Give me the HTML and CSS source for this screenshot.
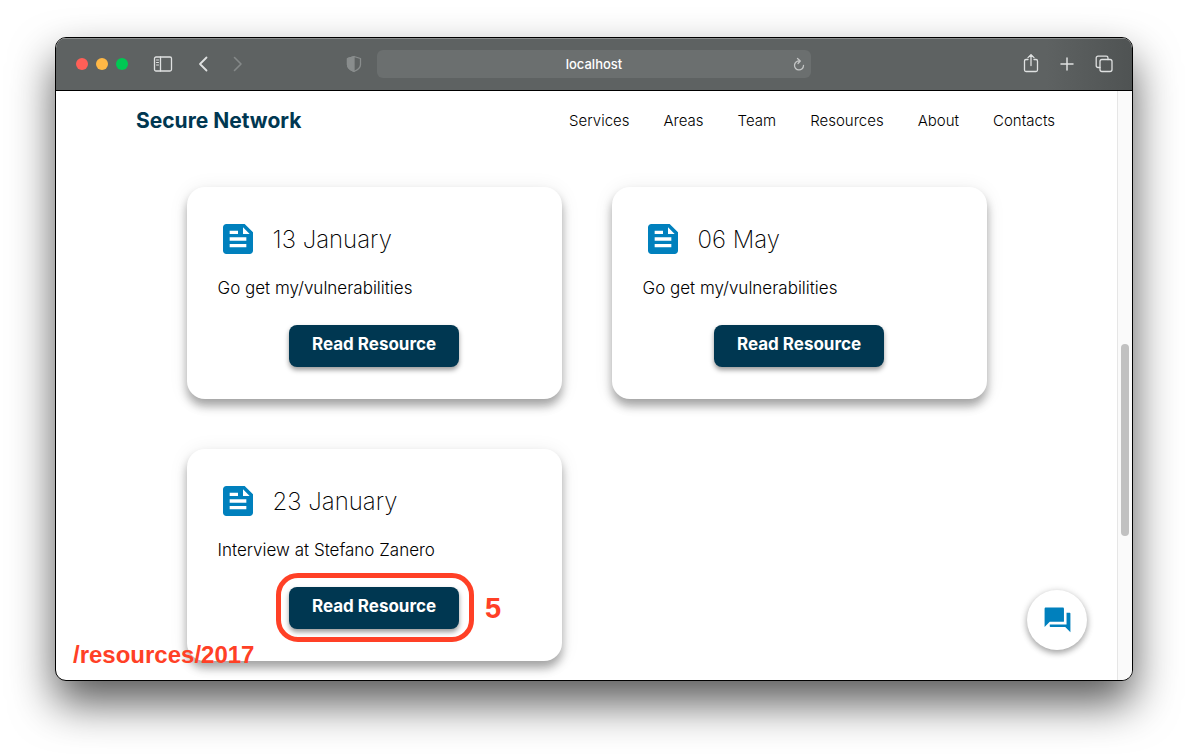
FILE: index.html
```html
<!DOCTYPE html>
<html lang="en">
<head>
<meta charset="utf-8">
<meta name="viewport" content="width=device-width, initial-scale=1">
<title>Secure Network</title>
<link rel="stylesheet" href="styles.css">
</head>
<body>
<svg class="defs" aria-hidden="true">
  <symbol id="doc" viewBox="0 0 24 24"><path fill-rule="evenodd" d="M16 3H5c-1.100 0-2 .9-2 2v14c0 1.100.9 2 2 2h14c1.100 0 2-.9 2-2V8zM7 7h5v2H7zm10 10H7v-2h10zm0-4H7v-2h10zm-2-4V5l4 4z"/></symbol>
</svg>
<div class="window">
  <div class="toolbar">
    <div class="tools-left">
      <span class="dots"><i class="dot red"></i><i class="dot amber"></i><i class="dot green"></i></span>
      <button class="tool sidebar-btn" aria-label="Sidebar"><svg width="20" height="16" viewBox="0 0 20 16"><rect x="1.500" y="1" width="17" height="14" rx="1.500"/><path d="M7.500 1v14"/><path d="M3.500 4h2M3.500 6.500h2M3.500 9h2" stroke-width="1"/></svg></button>
      <button class="tool back-btn" aria-label="Back"><svg width="10" height="16" viewBox="0 0 10 16"><path d="M8.500 1.500L2 8l6.500 6.500" stroke-width="1.800"/></svg></button>
      <button class="tool forward" aria-label="Forward"><svg width="10" height="16" viewBox="0 0 10 16"><path d="M1.500 1.500L8 8l-6.500 6.500" stroke-width="1.600"/></svg></button>
    </div>
    <div class="address">
      <button class="tool shield" aria-label="Privacy"><svg width="16" height="18" viewBox="0 0 16 18"><path d="M8 1.500L1.500 3.500v6c0 3.500 3 5.500 6.500 7 3.500-1.500 6.500-3.500 6.500-7v-6z"/><path class="fill" d="M8 1.500L1.500 3.500v6c0 3.500 3 5.500 6.500 7z"/></svg></button>
      <div class="url-box">
        <input class="url" type="text" value="localhost" aria-label="Address">
        <button class="tool reload" aria-label="Reload"><svg width="12" height="14" viewBox="0 0 12 14"><path d="M6.500 4A4.500 4.500 0 1 0 10.500 8.500M4.500 1.500l2.800 2.500L5 6.500"/></svg></button>
      </div>
    </div>
    <div class="tools-right">
      <button class="tool" aria-label="Share"><svg width="16" height="20" viewBox="0 0 16 20"><path d="M5 5.500H3A1.500 1.500 0 0 0 1.500 7v9A1.500 1.500 0 0 0 3 17.500h10a1.500 1.500 0 0 0 1.500-1.500V7A1.500 1.500 0 0 0 13 5.500h-2M8 11.500V.8M5 3.600l3-3 3 3"/></svg></button>
      <button class="tool" aria-label="New tab"><svg width="14" height="14" viewBox="0 0 14 14"><path d="M7 1v12M1 7h12" stroke-width="1.500"/></svg></button>
      <button class="tool" aria-label="Tabs"><svg width="18" height="18" viewBox="0 0 18 18"><rect x="5" y="4.500" width="12" height="12" rx="2"/><path d="M5 12.500H3A1.800 1.800 0 0 1 1.200 10.700V3A1.800 1.800 0 0 1 3 1.200h8.200A1.800 1.800 0 0 1 13 3v1.500"/></svg></button>
    </div>
  </div>
  <div class="view">
    <div class="page">
      <header class="site-header">
        <a class="brand" href="#">Secure Network</a>
        <nav class="nav">
          <a href="#">Services</a><a href="#">Areas</a><a href="#">Team</a><a href="#">Resources</a><a href="#">About</a><a href="#">Contacts</a>
        </nav>
      </header>
      <main class="cards">
        <article class="card">
          <div class="card-head"><svg class="doc"><use href="#doc"/></svg><h2>13 January</h2></div>
          <p>Go get my/vulnerabilities</p>
          <div class="action"><button class="read">Read Resource</button></div>
        </article>
        <article class="card">
          <div class="card-head"><svg class="doc"><use href="#doc"/></svg><h2>06 May</h2></div>
          <p>Go get my/vulnerabilities</p>
          <div class="action"><button class="read">Read Resource</button></div>
        </article>
        <article class="card">
          <div class="card-head"><svg class="doc"><use href="#doc"/></svg><h2>23 January</h2></div>
          <p>Interview at Stefano Zanero</p>
          <div class="action"><button class="read">Read Resource</button><span class="ring"></span><span class="step">5</span></div>
        </article>
      </main>
      <span class="path-note">/resources/2017</span>
      <button class="chat" aria-label="Chat"><svg width="31" height="31" viewBox="0 0 24 24"><path d="M21 6h-2v9H6v1.500c0 .3.200.5.500.5H18l4 4V6.500c0-.3-.2-.5-.5-.5zM17 12.500V3c0-.6-.4-1-1-1H3c-.6 0-1 .4-1 1v14l4-4h10.500c.3 0 .5-.2.500-.5z"/></svg></button>
    </div>
    <div class="scroll-track"><div class="scroll-thumb"></div></div>
  </div>
</div>
</body>
</html>
```

FILE: styles.css
```css
* { box-sizing: border-box; }
body {
  margin: 0;
  min-height: 100vh;
  padding: 37px 55px 73px;
  display: flex;
  background: #fff;
  color: #000;
  font-family: Inter, "Liberation Sans", sans-serif;
}
button { font: inherit; border: 0; padding: 0; cursor: pointer; }
a { color: inherit; text-decoration: none; }
.defs { position: absolute; width: 0; height: 0; }

.window {
  flex: 1;
  display: flex;
  flex-direction: column;
  border: 1px solid #000;
  border-radius: 11px;
  overflow: hidden;
  background: #fff;
  box-shadow: 0 22px 44px rgba(0, 0, 0, .65);
}
.toolbar {
  display: grid;
  grid-template-columns: 270fr 465px 302fr;
  align-items: center;
  height: 53px;
  padding: 0 19px 0 20px;
  background: linear-gradient(90deg, #5e6262 92%, #4f5353);
  border-bottom: 1px solid #000;
  box-shadow: inset 0 1px #8a8d8d;
}
.tools-left, .tools-right, .dots, .address { display: flex; align-items: center; }
.dots { gap: 8px; margin-right: 25px; }
.dot { width: 12px; height: 12px; border-radius: 50%; }
.red { background: #ff5f57; }
.amber { background: #ffb846; }
.green { background: #00c853; }
.tool { display: flex; background: none; }
.tool svg { fill: none; stroke: #dfe1e1; stroke-width: 1.300; stroke-linecap: round; stroke-linejoin: round; }
.sidebar-btn { margin-right: 25px; }
.back-btn { margin-right: 25px; }
.forward svg { stroke: #858989; }
.address { gap: 15px; }
.shield svg { stroke: #898d8d; }
.shield .fill { fill: #898d8d; }
.reload svg { stroke: #c3c5c5; }
.url-box {
  flex: 1;
  display: flex;
  align-items: center;
  height: 28px;
  padding: 0 6px 0 18px;
  border-radius: 6px;
  background: #6b6f6f;
}
.url {
  flex: 1;
  min-width: 0;
  border: 0;
  padding: 0;
  background: none;
  color: #fff;
  text-align: center;
  font: 500 13px Inter, sans-serif;
}
.tools-right { justify-content: flex-end; gap: 21px; }

.view { flex: 1; display: flex; }
.page { flex: 1; position: relative; }
.site-header {
  display: flex;
  justify-content: space-between;
  align-items: center;
  height: 59px;
  padding: 0 62px 0 80px;
}
.brand { font-size: 21px; font-weight: 700; color: #003751; }
.nav { display: flex; justify-content: space-between; width: 486px; font-size: 15px; font-weight: 300; }
.cards {
  display: grid;
  grid-template-columns: 1fr 1fr;
  gap: 50px;
  max-width: 800px;
  margin: 37px auto 19px;
}
.card {
  padding: 32px 31px;
  border-radius: 18px;
  background: #fff;
  box-shadow: 0 7px 10px rgba(0, 0, 0, .33), 0 2px 20px rgba(0, 0, 0, .08);
}
.card-head { display: flex; align-items: center; gap: 15px; }
.doc { width: 40px; height: 40px; fill: #0080bd; }
.card h2 { margin: 0; padding-top: 2px; font-size: 24px; line-height: 38px; font-weight: 200; }
.card p { margin: 17px 0 25px; font-size: 17px; line-height: 24px; font-weight: 300; }
.action { position: relative; width: 170px; margin: 0 auto; }
.read {
  display: block;
  width: 100%;
  height: 42px;
  padding-bottom: 4px;
  border-radius: 8px;
  background: #003751;
  color: #fff;
  font-size: 17px;
  font-weight: 700;
  box-shadow: 0 3px 5px rgba(0, 0, 0, .4);
}
.ring {
  position: absolute;
  inset: -14px -15px -13px -13px;
  border: 5px solid #ff4026;
  border-radius: 22px;
  pointer-events: none;
}
.step, .path-note {
  position: absolute;
  color: #ff4026;
  font-family: "Liberation Sans", Arial, sans-serif;
  font-weight: 700;
}
.step { left: 196px; top: 5px; font-size: 29px; line-height: 32px; }
.path-note { left: 17px; bottom: 11px; font-size: 24px; line-height: 28px; }
.chat {
  position: absolute;
  right: 30px;
  bottom: 30px;
  width: 60px;
  height: 60px;
  display: grid;
  place-items: center;
  border-radius: 50%;
  background: #fff;
  box-shadow: 0 3px 6px rgba(0, 0, 0, .3), 0 1px 8px rgba(0, 0, 0, .12);
}
.chat svg { fill: #0080bd; }
.scroll-track {
  width: 15px;
  padding: 253px 3px 0;
  border-left: 1px solid #e6e6e6;
  background: #fafafa;
}
.scroll-thumb { height: 192px; border-radius: 4px; background: #c1c1c1; }
```
